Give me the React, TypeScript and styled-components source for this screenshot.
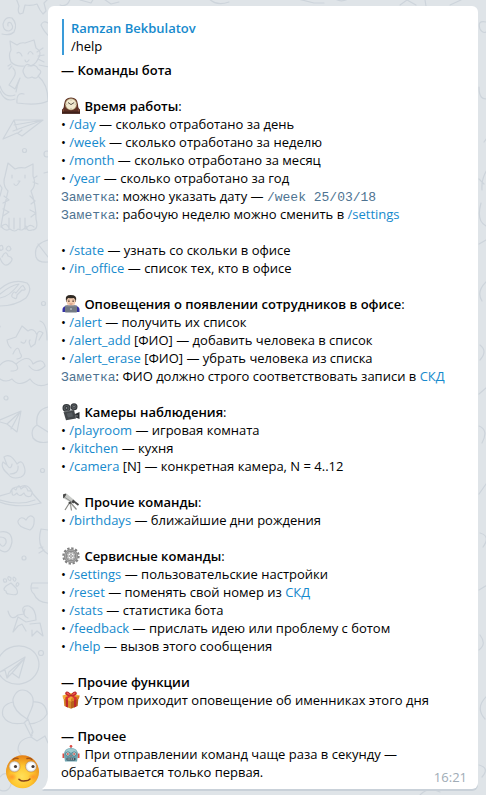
import React from 'react';
import styled, { createGlobalStyle } from 'styled-components';

const GlobalStyle = createGlobalStyle`
  * { box-sizing: border-box; }
  body {
    margin: 0;
    background: #dfe4e8;
    color: #000;
    font-family: "Open Sans", "Noto Sans", sans-serif;
    font-size: 13px;
    line-height: 18px;
  }
`;

const Chat = styled.main`
  position: relative;
  display: flex;
  align-items: flex-end;
  min-height: 100vh;
  padding: 6px 8px 6px 6px;
  overflow: hidden;
`;

const Wallpaper = styled.svg`
  position: absolute;
  inset: 0;
  width: 100%;
  height: 100%;
  fill: none;
  stroke: #cdd4db;
  stroke-width: 1.2;
  stroke-linecap: round;
  stroke-linejoin: round;
`;

const Avatar = styled.svg`
  position: relative;
  flex: none;
  width: 34px;
  height: 34px;
`;

const Tail = styled.svg`
  position: relative;
  flex: none;
  width: 6px;
  height: 12px;
  margin-left: 2px;
  filter: drop-shadow(0 2px 0 #c9d1d9);
`;

const Bubble = styled.article`
  position: relative;
  flex: 1;
  min-width: 0;
  padding: 13px 11px 3px 13px;
  background: #fff;
  border-radius: 6px 6px 6px 0;
  box-shadow: 0 2px 0 #c9d1d9;
`;

const Reply = styled.blockquote`
  margin: 0 0 6px 1px;
  padding-left: 7px;
  border-left: 2px solid #3a9bd9;
`;

const Author = styled.div`
  color: #168acd;
  font-weight: 600;
`;

const Section = styled.section`
  margin-bottom: 18px;
`;

const Line = styled.div`
  min-height: 18px;
`;

const Heading = styled.strong`
  font-weight: 600;
`;

const Command = styled.a`
  color: #168acd;
  text-decoration: none;
`;

const Mono = styled.code`
  color: #4e7391;
  font-family: "Liberation Mono", monospace;
  font-size: 13px;
  line-height: 1;
`;

const Emoji = styled.svg`
  width: 18px;
  height: 18px;
  margin: 0 1px;
  vertical-align: top;
`;

const Footer = styled.div`
  display: flex;
  align-items: flex-end;
  justify-content: space-between;
`;

const Closing = styled.div`
  padding-bottom: 5px;
`;

const Time = styled.time`
  flex: none;
  color: #a0acb6;
`;

const Clock = () => (
  <Emoji viewBox="0 0 18 18" aria-label="часы" role="img">
    <path d="M0 16.500V12.500Q2 11.500 2 7.500Q2.500.5 9 .5T16 7.500Q16 11.500 18 12.500V16.500Z" fill="#5e3125" />
    <path d="M0 14.500H18V16.800H0Z" fill="#40201a" />
    <path d="M1.500 12.500V14.500M16.500 12.500V14.500" stroke="#87523b" strokeWidth=".8" />
    <circle cx="9" cy="7.200" r="6" fill="#ad9874" />
    <circle cx="9" cy="7.200" r="5.200" fill="#f1e9cf" />
    <path d="M6 5.500 9 7.600 12.200 5.500" fill="none" stroke="#4b4339" strokeWidth=".9" />
    <path d="M9 2.700V3.500M9 11V11.800M4.300 7.200H5.200M12.800 7.200H13.700" stroke="#918772" strokeWidth=".7" />
  </Emoji>
);

const Technologist = () => (
  <Emoji viewBox="0 0 18 18" aria-label="сотрудник" role="img">
    <path d="M.5 17V14Q1 11 5.500 10.500H12.500Q17 11 17.500 14V17Z" fill="#3432a5" />
    <path d="M6.500 9H11.500V12H6.500Z" fill="#e9bd99" />
    <path d="M3.900 5Q3 .2 8.500 .1Q15 0 14.100 5L13.500 7H4.500Z" fill="#302923" />
    <path d="M4.500 5Q5.500 4.200 6 3Q9 3.400 12 3Q12.500 4.200 13.500 5L13.300 8Q12.300 11.500 9 11.500T4.700 8Z" fill="#f4cdb1" />
    <path d="M5.800 5.200H7.700M10.300 5.200H12.200" stroke="#53413a" strokeWidth=".6" />
    <circle cx="6.900" cy="6.400" r=".6" fill="#38271f" /><circle cx="11.100" cy="6.400" r=".6" fill="#38271f" />
    <path d="M7.500 8.800Q9 9.500 10.500 8.800" fill="none" stroke="#b66758" strokeWidth=".7" />
    <rect x="3" y="10.500" width="12" height="7" rx=".7" fill="#737a83" />
    <path d="M3.500 11H14.500" stroke="#969ca4" strokeWidth=".7" />
    <circle cx="9" cy="14" r=".8" fill="#d8dce0" />
  </Emoji>
);

const Camera = () => (
  <Emoji viewBox="0 0 18 18" aria-label="камера" role="img">
    <circle cx="4.500" cy="5" r="4" fill="#34383b" /><circle cx="12" cy="3.800" r="3.500" fill="#34383b" />
    <path d="M1.500 9 12 6.800 14 15.500 4 17.200Z" fill="#424649" />
    <path d="M13 11 17.500 9V16L13.800 14.500Z" fill="#292d30" />
    <circle cx="4.500" cy="5" r="2.500" fill="none" stroke="#63686c" strokeWidth=".8" /><circle cx="12" cy="3.800" r="2" fill="none" stroke="#63686c" strokeWidth=".8" />
    <circle cx="4.500" cy="5" r=".8" fill="#a4a8ac" /><circle cx="12" cy="3.800" r=".7" fill="#a4a8ac" />
    <path d="M4.500 10.500 10 9.300 11 13.500 6 14.500Z" fill="#565c60" />
    <path d="M2 9 11.800 7" stroke="#85898c" strokeWidth=".6" />
    <path d="M15 12V13.700" stroke="#90959a" />
  </Emoji>
);

const Telescope = () => (
  <Emoji viewBox="0 0 18 18" aria-label="телескоп" role="img">
    <path d="M8 9 3 17M8 9 9.500 17.500M8 9 14.500 16.500" stroke="#8b8b87" strokeWidth="1.200" />
    <path d="M8 10 8.500 15M7.500 10 12.500 15" stroke="#c2c2bd" strokeWidth=".5" />
    <path d="M1 1.500 4.500.5 12.500 7.200 10.200 10.200 1.200 5Z" fill="#c9cbc8" />
    <path d="M1 1.500 3.500.6 4.300 1.500 2 5.200 1.200 5Z" fill="#4b4b4b" />
    <path d="M3 4.500 10.500 9.500" stroke="#888" strokeWidth=".8" />
    <path d="M11 6.500 13 8 11.500 10.500 9.500 9.300Z" fill="#454545" />
    <path d="M12 8.500 16.500 12" stroke="#444" strokeWidth="1.800" />
    <path d="M6.500 9 9 8.500 9.500 10.500 7 11Z" fill="#494a49" />
  </Emoji>
);

const Gear = () => (
  <Emoji viewBox="0 0 18 18" aria-label="настройки" role="img">
    <circle cx="9" cy="9" r="7.600" fill="none" stroke="#808080" strokeWidth="2.200" strokeDasharray="2.300 1.680" />
    <circle cx="9" cy="9" r="5.500" fill="none" stroke="#8d8d8d" strokeWidth="3.200" />
    <circle cx="9" cy="9" r="5.700" fill="none" stroke="#a9a9a9" strokeWidth="1" />
    <circle cx="9" cy="9" r="3.500" fill="#fff" stroke="#777" strokeWidth=".7" />
    <path d="M9 5.500V12.500M5.500 9H12.500" stroke="#999" strokeWidth=".8" />
    <circle cx="9" cy="9" r="1.400" fill="#d8d8d8" stroke="#888" strokeWidth=".7" />
  </Emoji>
);

const Gift = () => (
  <Emoji viewBox="0 0 18 18" aria-label="подарок" role="img">
    <path d="M1.500 6 9 9V17.800L2.300 15Z" fill="#d48729" />
    <path d="M9 9 16.500 6 15.700 15 9 17.800Z" fill="#b76219" />
    <path d="M.5 4.500 9 2 17.500 4.500 17 7.500 9 10.500 1 7.500Z" fill="#f0af3c" />
    <path d="M9 7.800 17.500 4.500 17 7.500 9 10.500Z" fill="#d88123" />
    <path d="M3.500 7 6 8V16.500L3.900 15.700ZM12 8 14.500 7 14.100 15.700 12 16.500Z" fill="#be272a" />
    <path d="M3.500 3.600 6 3 14.500 6 14.300 8.500 12 9.400V7ZM14.500 3.600 12 3 3.500 6 3.700 8.500 6 9.400V7Z" fill="#d93332" />
    <path d="M9 4.800C4 5 2 2 4.500.9Q7 .1 9 4.800Q11 .1 13.500.9C16 2 14 5 9 4.800" fill="#d82d2e" stroke="#9e2026" strokeWidth=".6" />
    <path d="M5 1.900 7.500 3.600M13 1.900 10.500 3.600" stroke="#ff8b75" strokeWidth=".7" />
  </Emoji>
);

const Robot = () => (
  <Emoji viewBox="0 0 18 18" aria-label="робот" role="img">
    <path d="M9 1V4" stroke="#76909c" strokeWidth="1.200" /><circle cx="9" cy="1.300" r="1.300" fill="#df4c45" />
    <path d="M2.500 8.500H.5V13H2.500ZM15.500 8.500H17.500V13H15.500Z" fill="#d94f46" />
    <path d="M2 10Q2 3 9 3T16 10L15 16.500H3Z" fill="#6fa5b1" />
    <path d="M3.300 7.500Q4 3.700 9 3.600T14.700 7.500Z" fill="#9fcbd0" />
    <circle cx="5.900" cy="9" r="2.100" fill="#e4f2ef" stroke="#426e7b" strokeWidth=".8" /><circle cx="12.100" cy="9" r="2.100" fill="#e4f2ef" stroke="#426e7b" strokeWidth=".8" />
    <circle cx="5.900" cy="9" r=".9" fill="#d04c43" /><circle cx="12.100" cy="9" r=".9" fill="#d04c43" />
    <path d="M8.200 11.500 9 9.800 9.800 11.500Z" fill="#b54b46" />
    <rect x="4.500" y="12.700" width="9" height="2.700" rx="1" fill="#354d59" /><path d="M5.500 14H12.500" stroke="#e3e7e5" strokeDasharray="1.200 .6" />
  </Emoji>
);

const FlushedFace = () => (
  <Avatar viewBox="0 0 34 34" role="img" aria-label="аватар">
    <defs>
      <radialGradient id="skin" cx=".48" cy=".65" r=".65">
        <stop stopColor="#ffe05a" /><stop offset=".5" stopColor="#ffc72f" /><stop offset="1" stopColor="#e57f14" />
      </radialGradient>
      <radialGradient id="eye"><stop offset=".6" stopColor="#fff" /><stop offset="1" stopColor="#c5cbd2" /></radialGradient>
      <radialGradient id="cheek"><stop stopColor="#ff8428" stopOpacity=".7" /><stop offset="1" stopColor="#ff8428" stopOpacity="0" /></radialGradient>
    </defs>
    <circle cx="16.500" cy="16.700" r="16.500" fill="url(#skin)" />
    <ellipse cx="6" cy="22" rx="5" ry="4" fill="url(#cheek)" /><ellipse cx="27" cy="22" rx="5" ry="4" fill="url(#cheek)" />
    <path d="M7 4.500Q9 2.800 12 3.500M21 3.500Q24 2.800 26 4.500" fill="none" stroke="#a55416" strokeWidth="1.400" strokeLinecap="round" />
    <circle cx="8.500" cy="11.500" r="5.600" fill="url(#eye)" stroke="#d28b32" strokeWidth=".6" /><circle cx="25" cy="11.500" r="5.600" fill="url(#eye)" stroke="#d28b32" strokeWidth=".6" />
    <circle cx="9.500" cy="11.500" r="1.600" fill="#473a35" /><circle cx="27" cy="11.500" r="1.600" fill="#473a35" />
    <path d="M13 24.300Q16 26.800 19 25.800 22 26.200 24 24" fill="none" stroke="#86431b" strokeWidth="1.500" strokeLinecap="round" />
  </Avatar>
);

const Doodles = () => (
  <Wallpaper aria-hidden="true">
    <path d="M16-2 19 6Q17 12 20 14L23 13 25 5Q32 6 37 4L40 10 43 14 46 11 44 3 48-1" />
    <path d="M8 26Q7 21 11 23Q15 29 9 31Q3 31 3 24Q5 16 12 18Q18 24 14 32Q10 36 2 34M48 23Q43 20 41 25Q44 32 50 37" />
    <path d="M11 62Q8 55 11 50L10 41 17 45Q21 42 25 43L34 40 36 48Q43 52 38 59Q35 66 28 66M11 62Q16 67 24 66" />
    <path d="M17 53Q20 51 22 56M28 54Q30 49 33 54M25 60Q26 64 29 60M37 52 43 48M38 56 44 55M38 59 44 62M11 64 8 66M12 66 9 69" />
    <path d="M24 68Q26 62 31 66Q36 64 38 69Q43 71 39 75Q37 80 32 77Q26 80 24 74Q22 71 24 68M13 68Q17 72 14 77L9 85 15 89 20 78M20 78Q17 85 16 92M0 86Q4 99 15 95M0 91Q5 103 15 99M39 65 49 67M38 76Q48 84 48 101Q38 106 17 103Q16 92 24 94" />
    <path d="M3 139 14 120 43 120 22 136 17 133 3 139M14 125 43 120 13 131M14 120 17 130M18 133 22 130" />
    <circle cx="24.500" cy="150.500" r="2" /><circle cx="47" cy="154" r="3" /><path d="M44 173 48 172" />
    <path d="M8 191Q2 185 5 176L8 163 15 169Q20 167 25 168L33 164 33 176Q37 185 31 191Q36 204 36 219Q39 230 32 230Q27 232 26 226Q23 232 18 229Q15 233 10 229Q5 232 1 226Q4 207 8 191M0 185 2 188 0 196M4 196 9 200 3 203M3 209 9 212 3 216M30 196 35 201 31 204M30 210 36 213 31 217M18 181H20L18 184Q16 187 14 184M12 175V178M25 175V178M34 178 37 176M33 182 38 184M9 229V218M14 229V218M20 229V218M25 229V218M1 227Q6 221 9 228M26 229Q29 223 34 227" />
    <path d="M0 246Q3 244 3 249Q0 252 0 249M6 249Q9 243 11 249Q9 253 6 249M2 257Q6 249 8 256Q15 258 10 263Q4 269 0 258M48 240Q33 244 36 257Q38 263 48 262M38 244 48 257" />
    <path d="M0 289Q13 278 27 283Q33 288 26 298Q15 306 0 306M0 294Q11 285 19 284Q9 297 0 298M13 293Q10 297 14 298Q17 300 17 295L22 290Q27 291 24 287Q23 284 20 288L16 293Q14 291 13 293" />
    <circle cx="43.500" cy="303.500" r="2" />
    <path d="M11 348Q8 346 7 340L16 337 22 326 28 331Q34 327 37 335L35 344 31 347Q28 342 30 340M21 342Q25 345 26 340M13 354Q18 343 20 353Q24 358 17 359M37 335Q38 329 43 333L39 340M40 321Q47 323 47 340M0 327V326M0 365Q8 357 16 364Q21 371 11 371M16 364Q29 353 33 364Q43 357 45 366M45 366Q36 375 29 366M0 379Q6 383 12 379Q19 388 30 379Q37 389 48 384" />
    <circle cx="6" cy="398" r="2" /><path d="M0 420 21 411 17 432 7 424 0 422M7 424 20 412 11 429M48 407Q35 410 37 425Q30 429 33 438Q38 444 48 442M37 425 48 432" />
    <path d="M8 474Q0 467 3 462L7 465 4 457Q10 452 17 464Q22 459 24 466Q27 474 21 477Q12 480 8 474M7 465Q11 471 12 464M18 466Q19 474 10 474" /><circle cx="42.500" cy="470.500" r="2" />
    <path d="M0 496 10 493Q12 486 20 487Q28 482 33 494L41 503Q19 509 0 502M0 500Q20 506 35 500M12 492Q11 486 16 490Q19 482 21 489Q26 484 28 491Q34 490 31 496Q26 498 24 493Q19 498 17 493Q12 498 12 492" />
    <path d="M30 530Q17 527 18 521Q21 515 26 520Q30 513 34 518Q35 527 30 530M0 532Q12 530 12 542Q9 556 0 550M0 537Q7 537 6 543Q3 549 0 544M48 554Q36 547 41 529L48 530M39 548 43 547M39 553 44 550" /><circle cx="24" cy="558" r="2" />
    <path d="M6 591Q2 590 6 586L11 583 16 588Q21 597 9 594Q6 594 6 591M4 582Q2 578 6 579Q8 583 4 582M8 579Q7 575 11 578Q11 583 8 579M13 579Q13 575 16 579Q15 584 13 579M16 585Q17 581 19 584Q17 588 16 585M48 583H32Q29 590 34 594Q37 602 48 603M32 588H38" />
    <path d="M8 611Q11 622 18 615L24 614Q20 605 29 606Q36 609 36 620L26 622 18 617M18 617 13 632 18 626 22 624 26 631M30 624 40 623 43 636 37 631 32 636 32 630M25 609Q22 616 28 618" />
    <ellipse cx="18" cy="665" rx="21" ry="19" transform="rotate(-12 18 665)" /><circle cx="41" cy="653" r="2.500" /><path d="M0 672 25 657 19 678 12 673 7 678 5 670 0 672M7 678 9 672 24 659 12 673" />
    <path d="M27 719Q12 710 13 699Q17 687 27 691Q37 697 31 710L27 719M13 702Q0 705 3 716Q8 726 24 723M33 702Q46 701 47 714Q42 723 29 724M24 723 28 719 33 732 31 736 25 724M32 732V736M31 737Q18 739 18 750 24 762 31 758M31 737 37 741 45 736 48 743M0 777Q6 769 12 780Q10 794 0 790" />
    <path d="M71-5Q69 8 60 5M80 0 91 3 94-2M101-3 111 4 119 2M207-4Q214 7 229 2M298-1 314 3 324 3M333-3Q340 4 350-2M400 5 407 0 416 5M425 0 426 6M450 5 461 0 464-5" />
    <path d="M486 22Q477 20 480 29Q484 36 489 29M479 87Q479 102 489 98M484 142 489 135M489 167Q481 177 482 190M479 179 484 184M481 203Q476 221 486 226M479 244 486 240M486 282Q476 292 482 301M480 345Q488 351 480 360M486 388 479 394M479 426Q489 430 482 443M486 484 479 494M480 533Q491 536 483 547M479 590 489 584M480 635Q487 644 479 650M486 697Q475 708 485 719M479 765Q490 768 482 777M420 795Q428 786 440 792" />
  </Wallpaper>
);

const work = [
  ['/day', 'сколько отработано за день'],
  ['/week', 'сколько отработано за неделю'],
  ['/month', 'сколько отработано за месяц'],
  ['/year', 'сколько отработано за год'],
];
const service = [
  ['/settings', 'пользовательские настройки'],
  ['/reset', 'поменять свой номер из СКД'],
  ['/stats', 'статистика бота'],
  ['/feedback', 'прислать идею или проблему с ботом'],
  ['/help', 'вызов этого сообщения'],
];

function Item({ command, args, children }: { command: string; args?: string; children: React.ReactNode }) {
  return <Line>• <Command href="#">{command}</Command>{args ? ` ${args}` : ''} — {children}</Line>;
}

export default function App() {
  return (
    <>
      <GlobalStyle />
      <Chat>
        <Doodles />
        <FlushedFace />
        <Tail viewBox="0 0 6 12"><path d="M6 0V12H0Q5 9 6 0" fill="#fff" /></Tail>
        <Bubble>
          <Reply><Author>Ramzan Bekbulatov</Author><div>/help</div></Reply>
          <Section><Line><Heading>— Команды бота</Heading></Line></Section>
          <Section>
            <Line><Clock /> <Heading>Время работы</Heading>:</Line>
            {work.map(([command, text]) => <Item key={command} command={command}>{text}</Item>)}
            <Line><Mono>Заметка</Mono>: можно указать дату — <Mono>/week 25/03/18</Mono></Line>
            <Line><Mono>Заметка</Mono>: рабочую неделю можно сменить в <Command href="#">/settings</Command></Line>
          </Section>
          <Section>
            <Item command="/state">узнать со скольки в офисе</Item>
            <Item command="/in_office">список тех, кто в офисе</Item>
          </Section>
          <Section>
            <Line><Technologist /> <Heading>Оповещения о появлении сотрудников в офисе</Heading>:</Line>
            <Item command="/alert">получить их список</Item>
            <Item command="/alert_add" args="[ФИО]">добавить человека в список</Item>
            <Item command="/alert_erase" args="[ФИО]">убрать человека из списка</Item>
            <Line><Mono>Заметка</Mono>: ФИО должно строго соответствовать записи в <Command href="#">СКД</Command></Line>
          </Section>
          <Section>
            <Line><Camera /> <Heading>Камеры наблюдения</Heading>:</Line>
            <Item command="/playroom">игровая комната</Item>
            <Item command="/kitchen">кухня</Item>
            <Item command="/camera" args="[N]">конкретная камера, N = 4..12</Item>
          </Section>
          <Section>
            <Line><Telescope /> <Heading>Прочие команды</Heading>:</Line>
            <Item command="/birthdays">ближайшие дни рождения</Item>
          </Section>
          <Section>
            <Line><Gear /> <Heading>Сервисные команды</Heading>:</Line>
            {service.map(([command, text]) => (
              <Item key={command} command={command}>
                {text.endsWith('СКД') ? <>{text.slice(0, -3)}<Command href="#">СКД</Command></> : text}
              </Item>
            ))}
          </Section>
          <Section>
            <Line><Heading>— Прочие функции</Heading></Line>
            <Line><Gift /> Утром приходит оповещение об именниках этого дня</Line>
          </Section>
          <Line><Heading>— Прочее</Heading></Line>
          <Footer>
            <Closing>
              <Line><Robot /> При отправлении команд чаще раза в секунду —</Line>
              <Line>обрабатывается только первая.</Line>
            </Closing>
            <Time>16:21</Time>
          </Footer>
        </Bubble>
      </Chat>
    </>
  );
}
